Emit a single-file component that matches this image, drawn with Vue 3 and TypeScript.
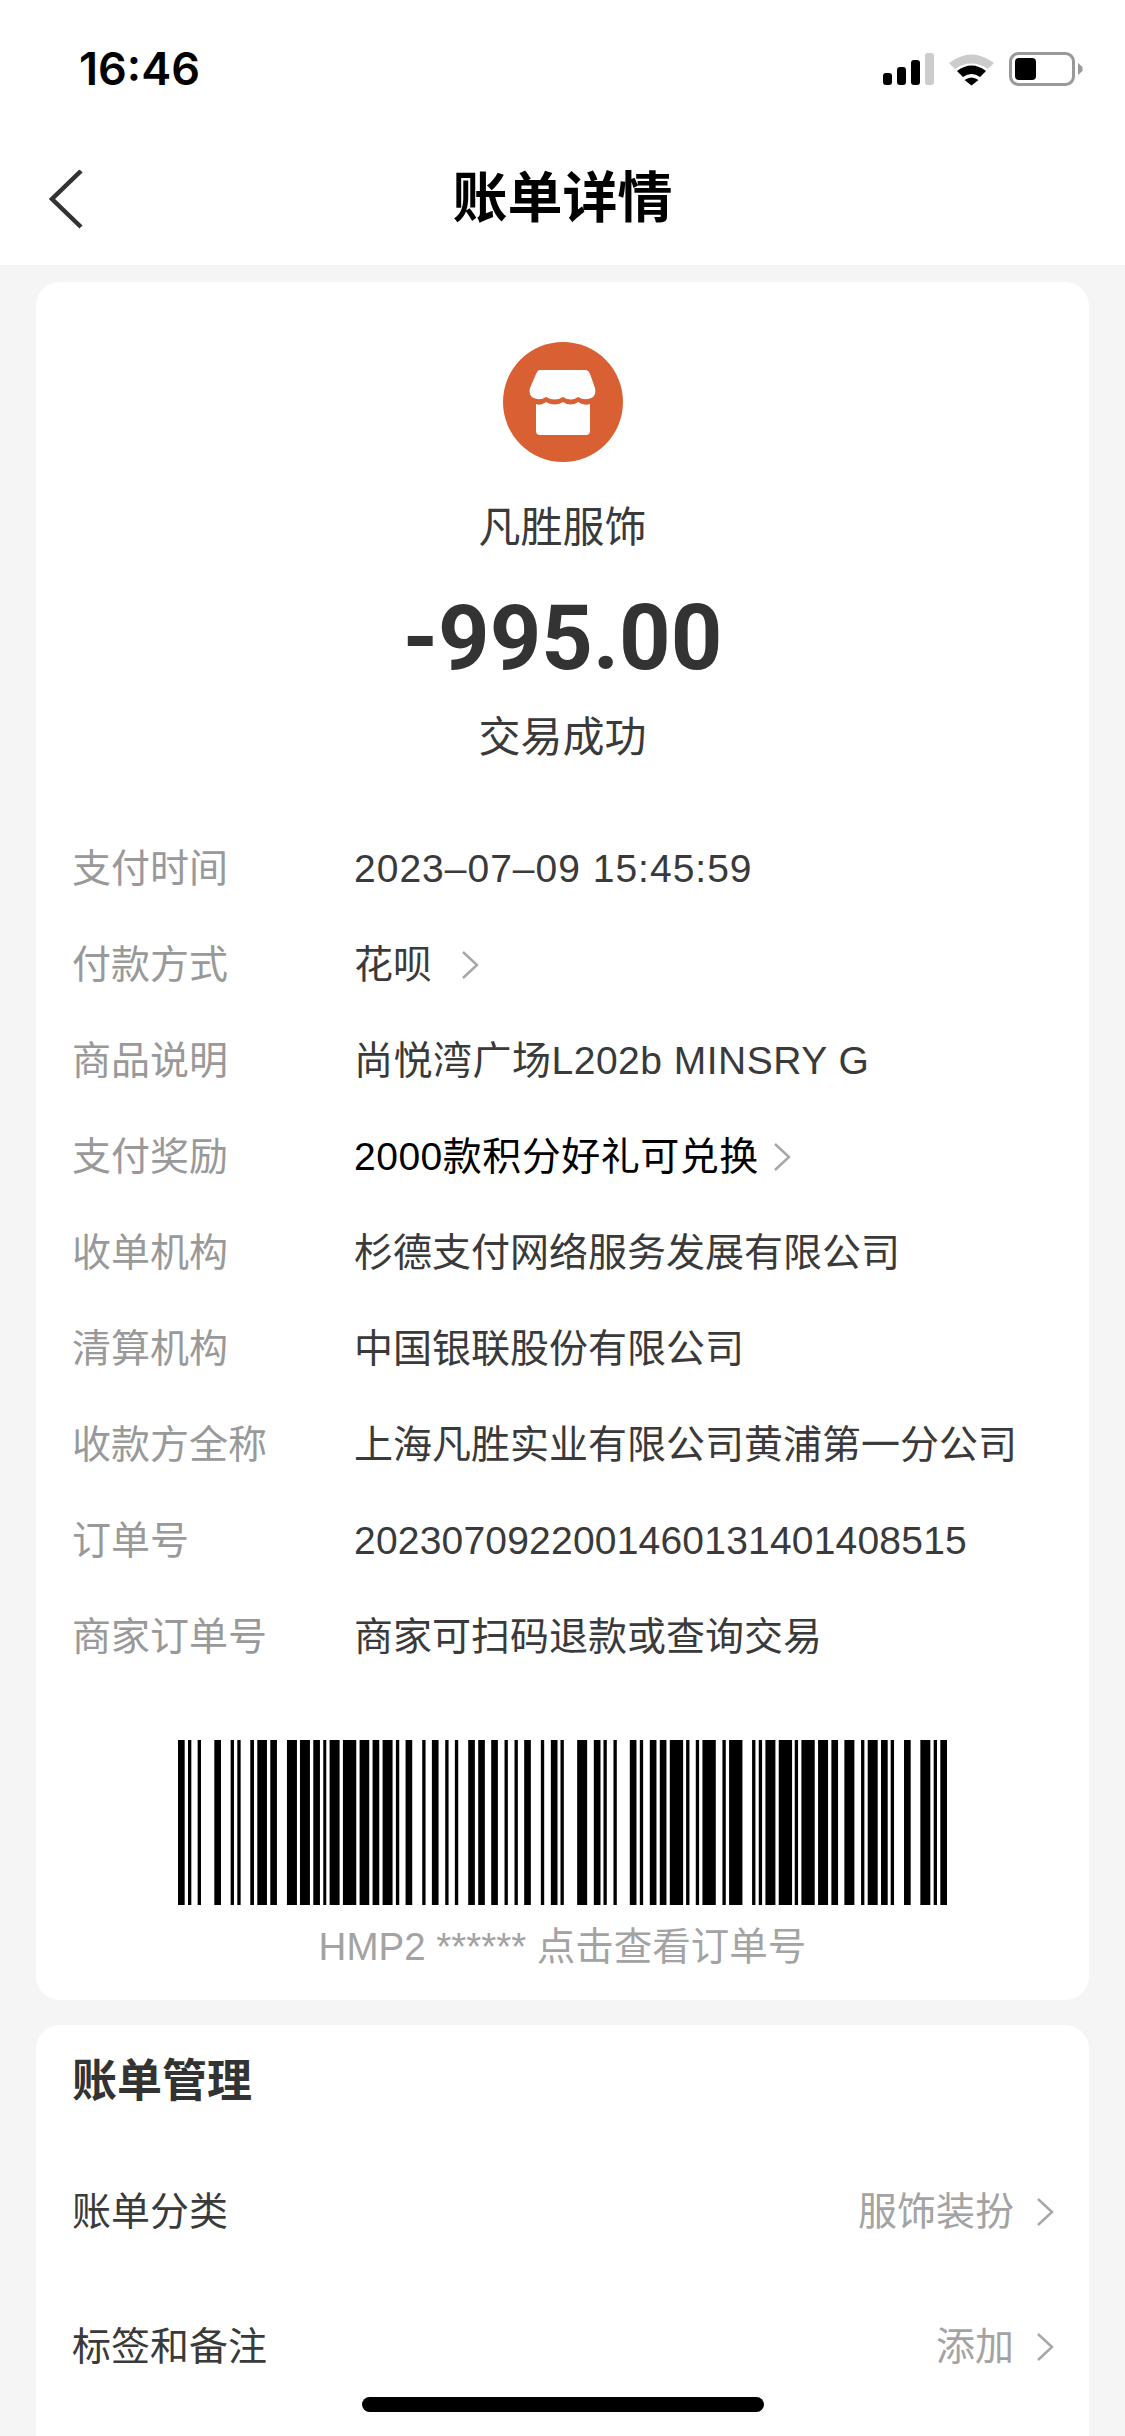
<script setup lang="ts">
// Alipay style bill detail page
type Row = { label: string; value: string; link?: boolean; strong?: boolean; track?: string }

const rows: Row[] = [
  { label: '支付时间', value: '2023–07–09 15:45:59', track: 'date' },
  { label: '付款方式', value: '花呗', link: true },
  { label: '商品说明', value: '尚悦湾广场L202b MINSRY G', track: 'latin' },
  { label: '支付奖励', value: '2000款积分好礼可兑换', link: true, strong: true, track: 'latin' },
  { label: '收单机构', value: '杉德支付网络服务发展有限公司' },
  { label: '清算机构', value: '中国银联股份有限公司' },
  { label: '收款方全称', value: '上海凡胜实业有限公司黄浦第一分公司' },
  { label: '订单号', value: '2023070922001460131401408515', track: 'digits' },
  { label: '商家订单号', value: '商家可扫码退款或查询交易' },
]

// bar edges read off the reference, in 1/3 px from the left of the code
const edges: [number, number][] = [
  [24, 44], [54, 64], [83, 93], [133, 153], [182, 192], [202, 212], [241, 252], [262, 291], [301, 321],
  [351, 381], [390, 420], [430, 450], [460, 469], [479, 509], [519, 559], [569, 598], [608, 628], [638, 668],
  [678, 688], [707, 727], [757, 767], [786, 806], [826, 836], [855, 865], [895, 915], [925, 945], [964, 984],
  [1004, 1014], [1034, 1044], [1063, 1083], [1113, 1123], [1143, 1163], [1172, 1182], [1222, 1252], [1272, 1292],
  [1301, 1311], [1331, 1341], [1380, 1400], [1410, 1420], [1440, 1460], [1470, 1490], [1500, 1540], [1549, 1559],
  [1578, 1588], [1598, 1638], [1658, 1668], [1678, 1718], [1747, 1757], [1767, 1777], [1787, 1817], [1827, 1867],
  [1875, 1885], [1895, 1935], [1945, 1975], [1985, 2005], [2024, 2054], [2074, 2084], [2094, 2124], [2134, 2154],
  [2163, 2173], [2203, 2223], [2252, 2282], [2292, 2302], [2312, 2332],
]
const bars = edges.map(([a, b]) => ({ x: a - 24, w: b - a }))
</script>

<template>
  <div class="page">
    <div class="top">
      <div class="status">
        <span class="time">16:46</span>
        <div class="status-icons">
          <svg width="52" height="34" viewBox="0 0 52 34">
            <rect x="0" y="21" width="9" height="12" rx="3" fill="#000" />
            <rect x="14" y="15" width="9" height="18" rx="3" fill="#000" />
            <rect x="28" y="8" width="9" height="25" rx="3" fill="#000" />
            <rect x="42" y="1" width="9" height="32" rx="3" fill="#ccc" />
          </svg>
          <svg width="46" height="34" viewBox="0 0 46 34">
            <path d="M0 11Q22.500-6 45 11L39 17Q22.500 6 6 17Z" fill="#ccc" />
            <path d="M8 19Q22.500 8 37 19L31 25Q22.500 19 14 25Z" fill="#000" />
            <path d="M15.500 28Q22.500 23 29.500 28L22.500 33.500Z" fill="#000" />
          </svg>
          <svg width="74" height="34" viewBox="0 0 74 34">
            <rect x="1.500" y="1.500" width="63" height="31" rx="8" fill="none" stroke="#999" stroke-width="3" />
            <rect x="6" y="6" width="21" height="22" rx="4" fill="#000" />
            <path d="M69 11 73.500 15V19L69 23Z" fill="#999" />
          </svg>
        </div>
      </div>
      <div class="nav">
        <svg class="back" width="36" height="60" viewBox="0 0 36 60">
          <path d="M33 1 4 29 33 57" fill="none" stroke="#333" stroke-width="4.500" />
        </svg>
        <h1>账单详情</h1>
      </div>
    </div>

    <main class="content">
      <section class="card">
        <div class="summary">
          <svg class="shop" width="120" height="120" viewBox="0 0 120 120">
            <circle cx="60" cy="60" r="60" fill="#d86033" />
            <path d="M37 28H82C85 28 86 30 87 32L92 46C93 50 92 55 88 56Q82 59 75 55Q68 60 60 55Q52 60 43 55Q37 59 31 56C27 55 26 50 27 46L33 32C34 30 35 28 37 28Z" fill="#fff" />
            <path d="M33 62Q38 64 43 60Q52 65 60 60Q68 65 75 60Q81 64 87 62V89C87 92 85 93 83 93H37C35 93 33 92 33 89Z" fill="#fff" />
          </svg>
          <div class="merchant">凡胜服饰</div>
          <div class="amount">-995.00</div>
          <div class="state">交易成功</div>
        </div>

        <div class="details">
          <div v-for="row in rows" :key="row.label" class="detail">
            <span class="label">{{ row.label }}</span>
            <span class="value" :class="[row.track, { strong: row.strong }]">{{ row.value }}</span>
            <svg v-if="row.link" class="more" :class="{ wide: !row.strong }" width="18" height="28" viewBox="0 0 18 28">
              <path d="M2 1 16 14 2 27" fill="none" stroke="#a8a8a8" stroke-width="2.500" />
            </svg>
          </div>
        </div>

        <div class="code">
          <svg width="769" height="165" viewBox="0 0 2308 165" preserveAspectRatio="none">
            <rect v-for="b in bars" :key="b.x" :x="b.x" y="0" :width="b.w" height="165" fill="#000" />
          </svg>
          <div class="code-text">HMP2 ****** 点击查看订单号</div>
        </div>
      </section>

      <section class="card manage">
        <h2>账单管理</h2>
        <div class="manage-row">
          <span>账单分类</span>
          <span class="manage-value">服饰装扮
            <svg width="18" height="28" viewBox="0 0 18 28"><path d="M2 1 16 14 2 27" fill="none" stroke="#a8a8a8" stroke-width="2.500" /></svg>
          </span>
        </div>
        <div class="manage-row">
          <span>标签和备注</span>
          <span class="manage-value">添加
            <svg width="18" height="28" viewBox="0 0 18 28"><path d="M2 1 16 14 2 27" fill="none" stroke="#a8a8a8" stroke-width="2.500" /></svg>
          </span>
        </div>
      </section>
    </main>

    <div class="home-bar"></div>
  </div>
</template>

<style scoped>
.page {
  position: relative;
  width: 1125px;
  height: 2436px;
  overflow: hidden;
  background: #f5f5f5;
  color: #333;
  font-family: "Liberation Sans", "Noto Sans CJK SC", sans-serif;
}
.top {
  background: #fff;
  height: 265px;
}
.status {
  height: 130px;
  padding: 0 42px 0 79px;
  display: flex;
  justify-content: space-between;
  align-items: flex-start;
}
.time {
  margin-top: 46px;
  font-size: 45px;
  line-height: 46px;
  font-weight: 600;
  color: #000;
  font-family: Inter, "Liberation Sans", sans-serif;
}
.status-icons {
  margin-top: 52px;
  display: flex;
  gap: 14px;
}
.nav {
  position: relative;
  height: 135px;
  display: flex;
  justify-content: center;
  padding-top: 36px;
  box-sizing: border-box;
}
.back {
  position: absolute;
  left: 48px;
  top: 40px;
}
h1 {
  margin: 0;
  font-size: 55px;
  line-height: 64px;
  font-weight: 700;
  color: #000;
}
.content {
  padding: 17px 36px 0;
  display: flex;
  flex-direction: column;
  gap: 25px;
}
.card {
  background: #fff;
  border-radius: 24px;
}
.summary {
  display: flex;
  flex-direction: column;
  align-items: center;
  padding-top: 60px;
}
.shop {
  display: block;
}
.merchant,
.state {
  font-size: 42px;
  line-height: 56px;
  color: #3a3a3a;
}
.merchant {
  margin-top: 38px;
}
.amount {
  margin-top: 28px;
  font-size: 90px;
  line-height: 110px;
  font-weight: 700;
  color: #333;
  font-family: Roboto, "Liberation Sans", sans-serif;
}
.state {
  margin-top: 16px;
}
.details {
  margin-top: 55px;
  padding: 0 36px;
}
.detail {
  height: 96px;
  display: flex;
  align-items: center;
  font-size: 39px;
  line-height: 56px;
}
.label {
  width: 282px;
  flex: none;
  color: #999;
}
.value {
  color: #3a3a3a;
  white-space: nowrap;
}
.value.strong {
  color: #000;
}
.value.date {
  letter-spacing: 1px;
}
.value.latin {
  letter-spacing: 0.5px;
}
.value.digits {
  letter-spacing: 0.2px;
}
.more {
  margin-left: 14px;
}
.more.wide {
  margin-left: 29px;
}
.code {
  margin-top: 55px;
  padding-bottom: 28px;
  display: flex;
  flex-direction: column;
  align-items: center;
}
.code svg {
  display: block;
}
.code-text {
  margin-top: 17px;
  font-size: 38.500px;
  line-height: 50px;
  color: #a3a3a3;
}
.manage {
  height: 500px;
  padding: 0 36px;
}
h2 {
  margin: 0;
  padding-top: 29px;
  font-size: 45px;
  line-height: 56px;
  font-weight: 700;
  color: #333;
}
.manage-row {
  height: 135px;
  display: flex;
  justify-content: space-between;
  align-items: center;
  font-size: 39px;
  line-height: 56px;
  color: #3a3a3a;
}
.manage-row:first-of-type {
  margin-top: 34px;
}
.manage-value {
  display: flex;
  align-items: center;
  gap: 22px;
  color: #a3a3a3;
  margin-right: -1px;
}
.home-bar {
  position: absolute;
  left: 362px;
  top: 2397px;
  width: 402px;
  height: 15px;
  border-radius: 8px;
  background: #000;
}
</style>

<style>
html, body { margin: 0; padding: 0; background: #f5f5f5; }
</style>
